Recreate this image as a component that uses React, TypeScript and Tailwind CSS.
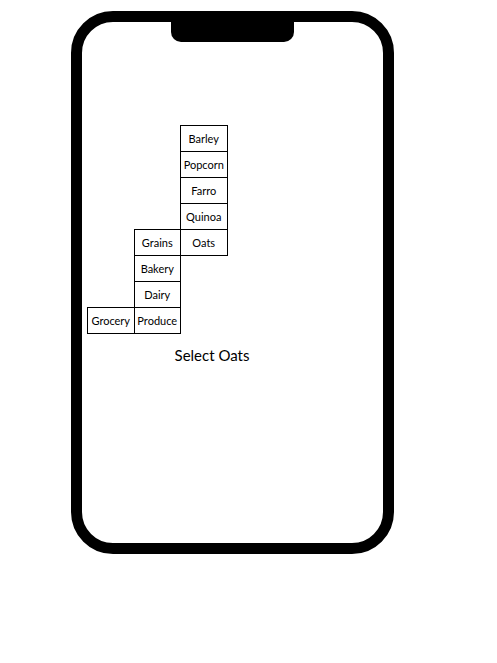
const columns: { items: string[]; mb: string }[] = [
  { items: ['Grocery'], mb: 'mb-0' },
  { items: ['Grains', 'Bakery', 'Dairy', 'Produce'], mb: 'mb-0' },
  { items: ['Barley', 'Popcorn', 'Farro', 'Quinoa', 'Oats'], mb: 'mb-[78px]' },
];

export default function App() {
  return (
    <div className="h-[663px] w-[497px] bg-white pl-[71px] pt-[11px] font-['Lato','Noto_Sans',sans-serif] text-black">
      <div className="relative h-[543px] w-[323px] rounded-[42px] border-[11px] border-black bg-white">
        <div className="absolute left-[89px] top-0 h-[20px] w-[123px] rounded-b-[10px] bg-black" />
        <div className="flex flex-col pl-[5px] pt-[103px]">
          <div className="flex items-end">
            {columns.map((col, ci) => (
              <div key={ci} className={`flex flex-col ${col.mb} ${ci > 0 ? '-ml-px' : ''}`}>
                {col.items.map((item, i) => (
                  <div
                    key={item}
                    className={`flex h-[27px] w-[47.5px] items-center justify-center border border-black text-[11px] leading-none ${i > 0 ? '-mt-px' : ''}`}
                  >
                    {item}
                  </div>
                ))}
              </div>
            ))}
          </div>
          <div className="mt-[11px] w-[250px] text-center text-[15px] leading-[20px]">Select Oats</div>
        </div>
      </div>
    </div>
  );
}
